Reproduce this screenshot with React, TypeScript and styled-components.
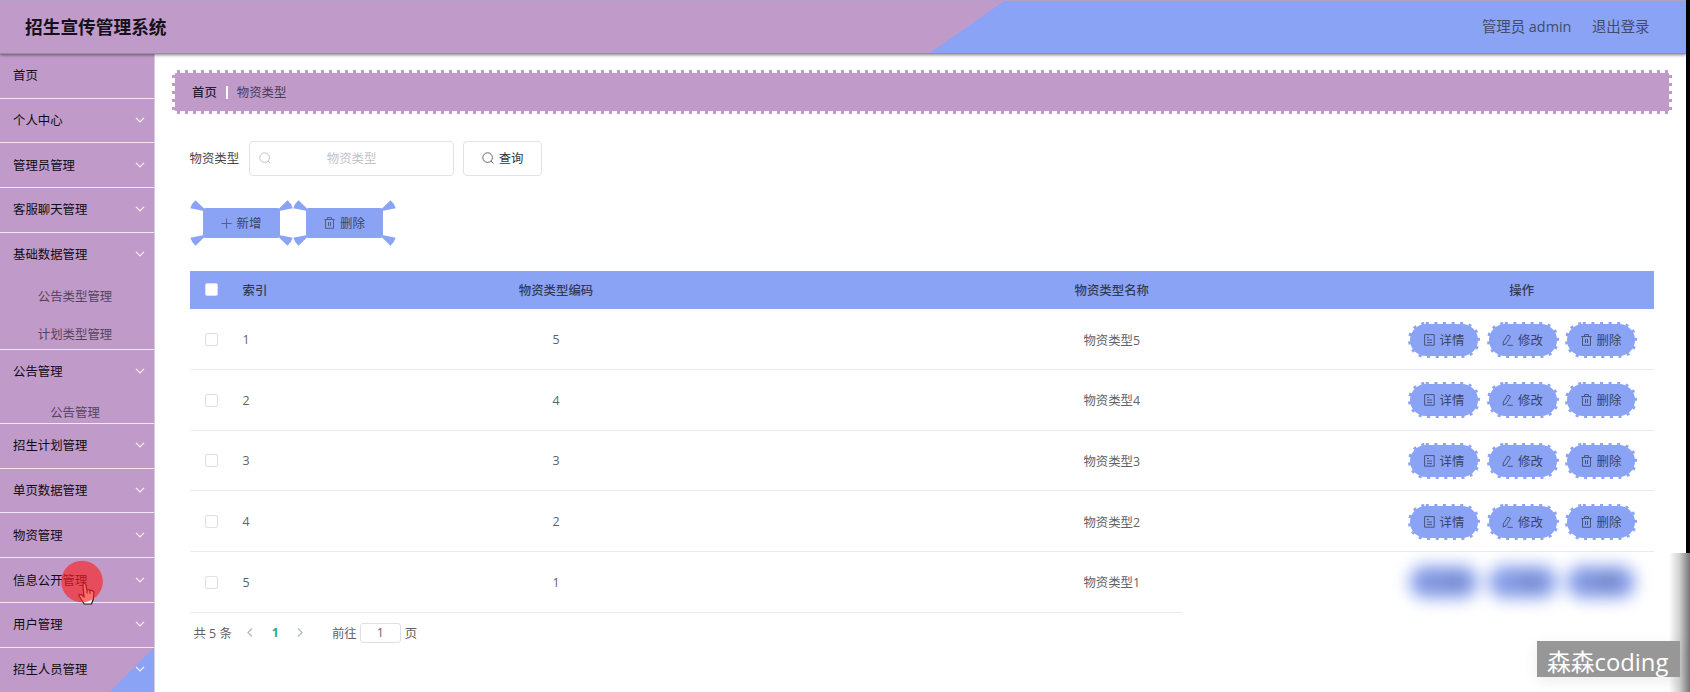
import React from "react";
import styled, { createGlobalStyle, css } from "styled-components";

const MAUVE = "#c09bc9";
const BLUE = "#8aa3f5";

const Global = createGlobalStyle`
  * { box-sizing: border-box; }
  body {
    margin: 0;
    background: #fff;
    overflow: hidden;
    font-family: "Open Sans", "Noto Sans CJK SC", sans-serif;
    font-size: 12.4px;
    color: #606266;
  }
`;

const Screen = styled.div`
  position: relative;
  width: 1690px;
  height: 692px;
  overflow: hidden;
  background: #fff;
`;

const Header = styled.header`
  position: relative;
  z-index: 2;
  display: flex;
  align-items: center;
  justify-content: space-between;
  width: 1686px;
  height: 54px;
  padding: 0 36.5px 2px 25px;
  background: ${MAUVE};
  border-top: 1px solid #b3a0c4;
  border-bottom: 1px solid #968f9f;
  box-shadow: 0 1px 3px rgba(0, 0, 0, 0.5);
  &::before {
    content: "";
    position: absolute;
    inset: 0 0 0 930px;
    background: ${BLUE};
    clip-path: polygon(74px 0, 100% 0, 100% 100%, 0 100%);
  }
`;

const Title = styled.h1`
  margin: 0;
  font-size: 17.7px;
  font-weight: 700;
  color: #16101a;
`;

const UserNav = styled.nav`
  position: relative;
  display: flex;
  gap: 20.5px;
  padding-bottom: 2px;
  font-size: 14.4px;
  color: #444b6c;
`;

const Body = styled.div`
  display: flex;
  height: 638px;
`;

const Sidebar = styled.aside`
  flex: none;
  width: 155px;
  border-right: 1px solid #d9cbe0;
  background: ${MAUVE};
`;

const Menu = styled.div`
  margin-top: -1.3px;
`;

const MenuItem = styled.div<{ $corner?: boolean }>`
  display: flex;
  align-items: center;
  justify-content: space-between;
  height: 44.8px;
  padding: 0 9px 1px 13px;
  border-top: 1px solid #f1e8f3;
  color: #120b16;
  ${(p) =>
    p.$corner &&
    css`
      background: linear-gradient(135deg, transparent 0 calc(100% - 31.5px), ${BLUE} calc(100% - 31px));
    `}
  &:first-child { border-top-color: transparent; }
`;

const SubMenu = styled.div<{ $height: number }>`
  height: ${(p) => p.$height}px;
`;

const SubItem = styled.div`
  height: 38.8px;
  line-height: 40px;
  text-align: center;
  padding-right: 4px;
  color: #56445d;
`;

const Main = styled.main`
  flex: none;
  width: 1531px;
  padding: 16px 0 0 17px;
`;

const notch = (dir: string) =>
  `repeating-linear-gradient(${dir}, transparent 0 5px, ${MAUVE} 5px 8px)`;

const Breadcrumb = styled.div`
  display: flex;
  align-items: center;
  width: 1500px;
  height: 44px;
  padding: 0 20px;
  color: #4b3a54;
  background:
    linear-gradient(${MAUVE}, ${MAUVE}) 3px 3px / calc(100% - 6px) calc(100% - 6px) no-repeat,
    ${notch("90deg")} 0 0 / 100% 3px no-repeat,
    ${notch("90deg")} 0 100% / 100% 3px no-repeat,
    ${notch("180deg")} 0 0 / 3px 100% no-repeat,
    ${notch("180deg")} 100% 0 / 3px 100% no-repeat;
`;

const Home = styled.span`
  color: #2b1d33;
  font-weight: 500;
`;

const Divider = styled.i`
  width: 2.5px;
  height: 13px;
  margin: 0 8.5px 0 9px;
  background: #fff;
`;

const Content = styled.section`
  width: 1464.4px;
  margin: 26.5px 0 0 17.5px;
`;

const SearchRow = styled.div`
  display: flex;
  align-items: center;
  height: 35.5px;
  color: #45474c;
`;

const Field = styled.div`
  position: relative;
  display: flex;
  align-items: center;
  justify-content: center;
  width: 205px;
  height: 35.5px;
  margin: 0 9px 0 10px;
  border: 1px solid #dfe2ea;
  border-radius: 4px;
  color: #c0c4cc;
  svg { position: absolute; left: 9px; }
`;

const QueryButton = styled.button`
  display: flex;
  align-items: center;
  justify-content: center;
  gap: 5px;
  width: 79px;
  height: 35.5px;
  padding: 0;
  border: 1px solid #dfe2ea;
  border-radius: 4px;
  background: #fff;
  font: inherit;
  color: #33353a;
  svg { color: #66686e; }
`;

const ActionRow = styled.div`
  display: flex;
  gap: 0.5px;
  height: 46px;
  margin-top: 24px;
`;

const WingBox = styled.div`
  position: relative;
  width: 103px;
  height: 46px;
  padding: 8px 13px;
  > svg { position: absolute; left: 0; top: 0; }
`;

const WingButton = styled.button`
  display: flex;
  align-items: center;
  justify-content: center;
  gap: 5px;
  width: 100%;
  height: 30px;
  padding: 0;
  border: 0;
  border-radius: 3px;
  background: ${BLUE};
  font: inherit;
  color: #3b4363;
  svg { color: #535e88; }
`;

const Table = styled.div`
  margin-top: 24.6px;
`;

const Row = styled.div<{ $head?: boolean; $short?: boolean }>`
  display: grid;
  grid-template-columns: 53px 35.5px 556px 555.5px 264.4px;
  align-items: center;
  text-align: center;
  height: ${(p) => (p.$head ? 38.6 : 60.7)}px;
  background: ${(p) =>
    p.$head
      ? BLUE
      : `linear-gradient(#e9ebf2, #e9ebf2) 0 100% / ${p.$short ? "992px" : "100%"} 1px no-repeat`};
  color: ${(p) => (p.$head ? "#323a55" : "#606266")};
  font-weight: ${(p) => (p.$head ? 500 : 400)};
`;

const IndexCell = styled.span`
  text-align: left;
  white-space: nowrap;
`;

const Check = styled.i`
  width: 13px;
  height: 13px;
  margin-left: 15.5px;
  border: 1px solid #dcdfe6;
  border-radius: 2px;
  background: #fff;
`;

const Actions = styled.div<{ $blur?: boolean }>`
  display: flex;
  gap: 6.5px;
  padding-left: 18.5px;
  ${(p) => p.$blur && css`filter: blur(8px) saturate(0.92);`}
`;

const Pill = styled.button`
  position: relative;
  display: flex;
  align-items: center;
  justify-content: center;
  gap: 5px;
  width: 72px;
  height: 36px;
  padding: 0;
  border: 0;
  background: none;
  font: inherit;
  color: #3b4363;
  > span, > svg { position: relative; }
  > svg { color: #4a5480; }
`;

const PillShape = styled.svg`
  && { position: absolute; left: 0; top: 0; }
`;

const Pagination = styled.div`
  display: flex;
  align-items: center;
  height: 20px;
  margin: 10px 0 0 4px;
  svg { color: #b4b8c0; }
`;

const Total = styled.span`
  margin-right: 15px;
`;

const Current = styled.b`
  margin: 0 18.5px 0 19px;
  color: #1fae9a;
`;

const PageInput = styled.span`
  width: 41px;
  height: 20px;
  margin: 0 4px 0 3px;
  border: 1px solid #dcdfe6;
  border-radius: 3px;
  line-height: 18px;
  text-align: center;
`;

const Jump = styled.span`
  margin-left: 28.5px;
`;

const BlackEdge = styled.div`
  position: absolute;
  z-index: 3;
  top: 0;
  right: 0;
  width: 4px;
  height: 553px;
  background: #000;
`;

const ShadeEdge = styled.div`
  position: absolute;
  top: 553px;
  right: 0;
  width: 21px;
  height: 139px;
  background: linear-gradient(90deg, rgba(70, 70, 70, 0), rgba(70, 70, 70, 0.25) 50%, rgba(70, 70, 70, 0.75));
`;

const Watermark = styled.div`
  position: absolute;
  left: 1537px;
  top: 641px;
  width: 143px;
  height: 36px;
  padding-left: 10px;
  background: #979797;
  box-shadow: 0 4px 16px rgba(0, 0, 0, 0.08);
  color: #fff;
  font-size: 23.8px;
  line-height: 43px;
  white-space: nowrap;
`;

const Pointer = styled.svg`
  position: absolute;
  z-index: 4;
  left: 61px;
  top: 560px;
`;

type IconProps = { size?: number };

const strokeProps = { fill: "none", stroke: "currentColor", strokeWidth: 1 };

const SearchIcon = ({ size = 12 }: IconProps) => (
  <svg width={size} height={size} viewBox="0 0 12 12" {...strokeProps}>
    <circle cx="5.6" cy="5.6" r="4.8" />
    <path d="M9 9l2.4 2.4" />
  </svg>
);

const PlusIcon = () => (
  <svg width="11" height="11" viewBox="0 0 11 11" {...strokeProps}>
    <path d="M5.5 .5v10M.5 5.5h10" />
  </svg>
);

const TrashIcon = () => (
  <svg width="11" height="12" viewBox="0 0 11 12" {...strokeProps}>
    <path d="M.3 2.5h10.4M1.5 2.5v8.8h8V2.5M3.5 2.3V.6h4v1.7M4.5 5v4M6.5 5v4" />
  </svg>
);

const DetailIcon = () => (
  <svg width="11" height="12" viewBox="0 0 11 12" {...strokeProps}>
    <path d="M.6.6h9.6v10.6H.6zM3 3.5h2M3 6h5M3 8.6h5" />
  </svg>
);

const EditIcon = () => (
  <svg width="11" height="12" viewBox="0 0 11 12" {...strokeProps}>
    <path d="M5.7 1l2.8 1.6-4.4 7.2-3 1.3.2-3.1zM5.5 11.3h5.3" />
  </svg>
);

const Chevron = () => (
  <svg width="10" height="6" viewBox="0 0 10 6" fill="none" stroke="#faeffc" strokeWidth="1.2">
    <path d="M1 .8l4 4 4-4" />
  </svg>
);

const Arrow = ({ d }: { d: string }) => (
  <svg width="6" height="9" viewBox="0 0 6 9" fill="none" stroke="currentColor" strokeWidth="1.3">
    <path d={d} />
  </svg>
);

const Wings = () => (
  <svg width="103" height="46" viewBox="0 0 103 46" fill={BLUE}>
    <path d="M5.5.3Q2 3 .3 8.2L12.800 10.800 14.500 9z" />
    <path d="M97.500.3Q101 3 102.700 8.200L90.200 10.800 88.500 9z" />
    <path d="M5.500 45.700Q2 43 .3 37.800L12.800 35.200 14.500 37z" />
    <path d="M97.500 45.700Q101 43 102.700 37.800L90.200 35.200 88.500 37z" />
  </svg>
);

const PillButton = ({ icon, label }: { icon: React.ReactNode; label: string }) => (
  <Pill>
    <PillShape width="72" height="36" viewBox="0 0 72 36">
      <rect x="2" y="2" width="68" height="32" rx="16" fill={BLUE} />
      <rect
        x="1.3"
        y="1.3"
        width="69.4"
        height="33.4"
        rx="16.5"
        fill="none"
        stroke={BLUE}
        strokeWidth="2.6"
        strokeDasharray="3 5.6"
      />
    </PillShape>
    {icon}
    <span>{label}</span>
  </Pill>
);

const menu: { label: string; height?: number; children?: string[] }[] = [
  { label: "首页" },
  { label: "个人中心" },
  { label: "管理员管理" },
  { label: "客服聊天管理" },
  { label: "基础数据管理", height: 72, children: ["公告类型管理", "计划类型管理"] },
  { label: "公告管理", height: 29.4, children: ["公告管理"] },
  { label: "招生计划管理" },
  { label: "单页数据管理" },
  { label: "物资管理" },
  { label: "信息公开管理" },
  { label: "用户管理" },
  { label: "招生人员管理" },
];

const rows = [5, 4, 3, 2, 1];

export default function App() {
  return (
    <Screen>
      <Global />
      <Header>
        <Title>招生宣传管理系统</Title>
        <UserNav>
          <span>管理员 admin</span>
          <span>退出登录</span>
        </UserNav>
      </Header>
      <Body>
        <Sidebar>
          <Menu>
            {menu.map((m, i) => (
              <React.Fragment key={m.label}>
                <MenuItem $corner={i === menu.length - 1}>
                  <span>{m.label}</span>
                  {i > 0 && <Chevron />}
                </MenuItem>
                {m.children && (
                  <SubMenu $height={m.height!}>
                    {m.children.map((c) => (
                      <SubItem key={c}>{c}</SubItem>
                    ))}
                  </SubMenu>
                )}
              </React.Fragment>
            ))}
          </Menu>
        </Sidebar>
        <Main>
          <Breadcrumb>
            <Home>首页</Home>
            <Divider />
            <span>物资类型</span>
          </Breadcrumb>
          <Content>
            <SearchRow>
              <span>物资类型</span>
              <Field>
                <SearchIcon />
                <span>物资类型</span>
              </Field>
              <QueryButton>
                <SearchIcon />
                查询
              </QueryButton>
            </SearchRow>
            <ActionRow>
              <WingBox>
                <Wings />
                <WingButton>
                  <PlusIcon />
                  新增
                </WingButton>
              </WingBox>
              <WingBox>
                <Wings />
                <WingButton>
                  <TrashIcon />
                  删除
                </WingButton>
              </WingBox>
            </ActionRow>
            <Table>
              <Row $head>
                <Check />
                <IndexCell>索引</IndexCell>
                <span>物资类型编码</span>
                <span>物资类型名称</span>
                <span>操作</span>
              </Row>
              {rows.map((n, i) => (
                <Row key={n} $short={i === rows.length - 1}>
                  <Check />
                  <IndexCell>{i + 1}</IndexCell>
                  <span>{n}</span>
                  <span>物资类型{n}</span>
                  <Actions $blur={i === rows.length - 1}>
                    <PillButton icon={<DetailIcon />} label="详情" />
                    <PillButton icon={<EditIcon />} label="修改" />
                    <PillButton icon={<TrashIcon />} label="删除" />
                  </Actions>
                </Row>
              ))}
            </Table>
            <Pagination>
              <Total>共 5 条</Total>
              <Arrow d="M5 .5l-4 4 4 4" />
              <Current>1</Current>
              <Arrow d="M1 .5l4 4-4 4" />
              <Jump>前往</Jump>
              <PageInput>1</PageInput>
              <span>页</span>
            </Pagination>
          </Content>
        </Main>
      </Body>
      <BlackEdge />
      <ShadeEdge />
      <Watermark>森森coding</Watermark>
      <Pointer width="42" height="46" viewBox="0 0 42 46">
        <path
          d="M22 25c0-2 2.600-2 2.900 0l.8 4.500 5.300 1.200c1.500.4 2.200 1.300 2 2.800l-.8 6-1.700 4.500h-7.200l-3.100-4.500-2.500-4.300c1-1.700 3.200-.5 5.300 1.500zM26 29.500v4M29 30.300v3.500"
          fill="#fff"
          stroke="#2a1520"
          strokeWidth="1.2"
        />
        <circle cx="21" cy="21.5" r="20.8" fill="#fb2222" fillOpacity="0.65" />
      </Pointer>
    </Screen>
  );
}
